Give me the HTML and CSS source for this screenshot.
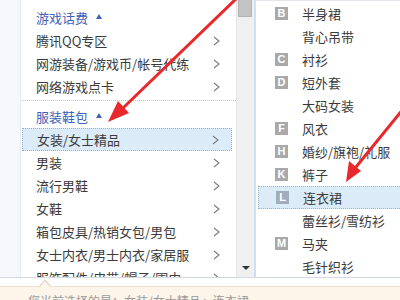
FILE: index.html
```html
<!DOCTYPE html>
<html lang="zh-CN">
<head>
<meta charset="utf-8">
<title>类目选择</title>
<link rel="stylesheet" href="styles.css">
</head>
<body>
<div class="page">
  <div class="main">
    <div class="gutter"></div>
    <div class="left">
      <div class="group">
        <div class="head">游戏话费 <span class="caret"></span></div>
        <div class="row"><span>腾讯QQ专区</span><svg class="chev" viewBox="0 0 7 10"><polyline points="1,1 6,5 1,9"/></svg></div>
        <div class="row"><span>网游装备/游戏币/帐号代练</span><svg class="chev" viewBox="0 0 7 10"><polyline points="1,1 6,5 1,9"/></svg></div>
        <div class="row"><span>网络游戏点卡</span><svg class="chev" viewBox="0 0 7 10"><polyline points="1,1 6,5 1,9"/></svg></div>
      </div>
      <div class="group sep">
        <div class="head">服装鞋包 <span class="caret"></span></div>
        <div class="row sel"><span>女装/女士精品</span><svg class="chev" viewBox="0 0 7 10"><polyline points="1,1 6,5 1,9"/></svg></div>
        <div class="row"><span>男装</span><svg class="chev" viewBox="0 0 7 10"><polyline points="1,1 6,5 1,9"/></svg></div>
        <div class="row"><span>流行男鞋</span><svg class="chev" viewBox="0 0 7 10"><polyline points="1,1 6,5 1,9"/></svg></div>
        <div class="row"><span>女鞋</span><svg class="chev" viewBox="0 0 7 10"><polyline points="1,1 6,5 1,9"/></svg></div>
        <div class="row"><span>箱包皮具/热销女包/男包</span><svg class="chev" viewBox="0 0 7 10"><polyline points="1,1 6,5 1,9"/></svg></div>
        <div class="row"><span>女士内衣/男士内衣/家居服</span><svg class="chev" viewBox="0 0 7 10"><polyline points="1,1 6,5 1,9"/></svg></div>
        <div class="row"><span>服饰配件/皮带/帽子/围巾</span><svg class="chev" viewBox="0 0 7 10"><polyline points="1,1 6,5 1,9"/></svg></div>
      </div>
    </div>
    <div class="scroll">
      <div class="thumb"></div>
      <div class="down"></div>
    </div>
    <div class="right">
      <div class="item"><span class="badge">B</span><span>半身裙</span></div>
      <div class="item"><span class="badge none"></span><span>背心吊带</span></div>
      <div class="item"><span class="badge">C</span><span>衬衫</span></div>
      <div class="item"><span class="badge">D</span><span>短外套</span></div>
      <div class="item"><span class="badge none"></span><span>大码女装</span></div>
      <div class="item"><span class="badge">F</span><span>风衣</span></div>
      <div class="item"><span class="badge">H</span><span>婚纱/旗袍/礼服</span></div>
      <div class="item"><span class="badge">K</span><span>裤子</span></div>
      <div class="item sel"><span class="badge">L</span><span>连衣裙</span></div>
      <div class="item"><span class="badge none"></span><span>蕾丝衫/雪纺衫</span></div>
      <div class="item"><span class="badge">M</span><span>马夹</span></div>
      <div class="item"><span class="badge none"></span><span>毛针织衫</span></div>
    </div>
  </div>
  <div class="foot">
    <div class="tip">您当前选择的是：女装/女士精品 &gt; 连衣裙</div>
  </div>
  <svg class="arrows" viewBox="0 0 400 300" width="400" height="300">
    <line x1="238" y1="-3" x2="123" y2="108" />
    <polygon points="108,122 129,113 118,101" />
    <line x1="404" y1="108" x2="356" y2="167" />
    <polygon points="346,182 361,171 349,161" />
  </svg>
</div>
</body>
</html>
```
FILE: styles.css
```css
* { box-sizing: border-box; }
body {
  margin: 0;
  font-family: "Noto Sans CJK SC", "Microsoft YaHei", sans-serif;
  font-size: 13px;
  color: #3a3a3a;
}
.page {
  position: relative;
  width: 400px;
  height: 300px;
  overflow: hidden;
  background: #fff;
}
.main {
  display: flex;
  height: 278px;
  border-bottom: 1px solid #d3d9e1;
}
.gutter {
  width: 21px;
  background: #f6f8fb;
  border-right: 1px solid #e7ecf3;
}
.left {
  width: 215px;
  overflow: hidden;
  padding-top: 6px;
}
.group.sep {
  margin-top: 2px;
  border-top: 1px dotted #c9c9c9;
  padding-top: 4px;
}
.head {
  height: 23px;
  display: flex;
  align-items: center;
  padding-left: 15px;
  color: #3d62b6;
  gap: 6px;
}
.caret {
  width: 0;
  height: 0;
  border-left: 3.5px solid transparent;
  border-right: 3.5px solid transparent;
  border-bottom: 5px solid #3d62b6;
  margin-left: 2px;
  margin-top: -2px;
}
.row {
  height: 23px;
  display: flex;
  align-items: center;
  justify-content: space-between;
  padding: 0 16px 0 15px;
  white-space: nowrap;
}
.row.sel {
  margin: 0 4px 0 1px;
  padding: 0 12px 0 14px;
  background: #dcebf8;
  border: 1px dotted #98b3cc;
}
.chev {
  width: 7px;
  height: 10px;
  flex: none;
  fill: none;
  stroke: #7b7b7b;
  stroke-width: 1.1;
}
.scroll {
  position: relative;
  width: 18px;
  background: #f0f0f0;
  border-left: 1px solid #e6e6e6;
}
.thumb {
  margin: 0 2px 0 1px;
  height: 17px;
  background: #c3c3c3;
  border: 1px solid #b3b3b3;
  border-top: none;
}
.down {
  position: absolute;
  left: 5px;
  bottom: 7px;
  width: 0;
  height: 0;
  border-left: 4px solid transparent;
  border-right: 4px solid transparent;
  border-top: 4px solid #333;
}
.right {
  flex: 1;
  border-left: 2px solid #cfe0f1;
  border-top: 1px solid #e2e6ec;
  padding-top: 1px;
  overflow: hidden;
}
.item {
  height: 23px;
  display: flex;
  align-items: center;
  gap: 14px;
  padding-left: 19px;
  white-space: nowrap;
}
.item.sel {
  margin-left: 2px;
  padding-left: 17px;
  background: #dcebf8;
  border: 1px dotted #98b3cc;
  border-right: none;
}
.badge {
  width: 13px;
  height: 13px;
  flex: none;
  background: #a9a9a9;
  color: #fff;
  font-family: "Liberation Sans", Arial, sans-serif;
  font-weight: bold;
  font-size: 11px;
  line-height: 13px;
  text-align: center;
}
.badge.none { background: transparent; }
.item.sel .badge { background: #9eaebd; }
.foot {
  padding-top: 8px;
}
.tip {
  position: relative;
  height: 20px;
  background: #fdf5ea;
  border-top: 1px solid #efe1cb;
  padding: 5px 0 0 28px;
  font-size: 12px;
  color: #9a9a9a;
  white-space: nowrap;
}
.tip::before, .tip::after {
  content: "";
  position: absolute;
  width: 0;
  height: 0;
  border-left: 6px solid transparent;
  border-right: 6px solid transparent;
}
.tip::before {
  left: 39px;
  top: -8px;
  border-bottom: 7px solid #e4d6c2;
}
.tip::after {
  left: 40px;
  top: -6px;
  border-left-width: 5px;
  border-right-width: 5px;
  border-bottom: 6px solid #fdf5ea;
}
.arrows {
  position: absolute;
  left: 0;
  top: 0;
  pointer-events: none;
}
.arrows line {
  stroke: #e8282b;
  stroke-width: 3;
  stroke-linecap: round;
}
.arrows polygon {
  fill: #e8282b;
}
```
